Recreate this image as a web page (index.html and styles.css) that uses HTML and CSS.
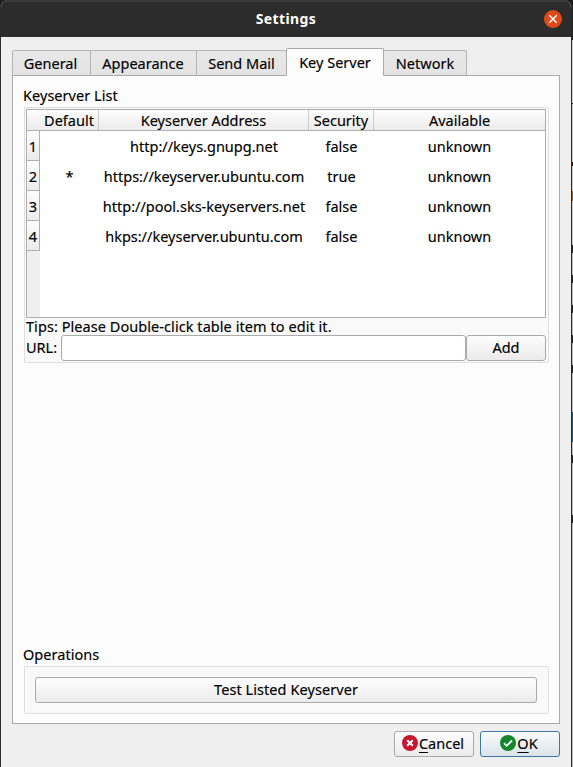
FILE: index.html
```html
<!DOCTYPE html>
<html lang="en">
<head>
<meta charset="utf-8">
<title>Settings</title>
<link rel="stylesheet" href="styles.css">
</head>
<body>
<div class="desktop">
  <main class="window">
    <header class="titlebar">
      <h1>Settings</h1>
      <button class="close" aria-label="Close"><svg width="18" height="18" viewBox="0 0 18 18"><circle cx="9" cy="9" r="9" fill="#e2491a"/><path d="M5.3 5.3l7.4 7.4M12.7 5.3l-7.4 7.4" stroke="#fff" stroke-width="1.5"/></svg></button>
    </header>
    <nav class="tabs">
      <div class="tab tab-general">General</div>
      <div class="tab tab-appearance">Appearance</div>
      <div class="tab tab-mail">Send Mail</div>
      <div class="tab tab-server active">Key Server</div>
      <div class="tab tab-network">Network</div>
    </nav>
    <section class="panel">
      <h2 class="label">Keyserver List</h2>
      <div class="group list-group">
        <div class="table">
          <div class="row head"><div></div><div>Default</div><div>Keyserver Address</div><div>Security</div><div>Available</div></div>
          <div class="row"><div class="num">1</div><div></div><div>http://keys.gnupg.net</div><div>false</div><div>unknown</div></div>
          <div class="row"><div class="num">2</div><div>*</div><div>https://keyserver.ubuntu.com</div><div>true</div><div>unknown</div></div>
          <div class="row"><div class="num">3</div><div></div><div>http://pool.sks-keyservers.net</div><div>false</div><div>unknown</div></div>
          <div class="row"><div class="num">4</div><div></div><div>hkps://keyserver.ubuntu.com</div><div>false</div><div>unknown</div></div>
          <div class="gutter"></div>
        </div>
        <p class="tips">Tips: Please Double-click table item to edit it.</p>
        <div class="url-row"><label for="url">URL:</label><input id="url" type="text"><button class="btn add">Add</button></div>
      </div>
      <h2 class="label ops">Operations</h2>
      <div class="group ops-group"><button class="btn test">Test Listed Keyserver</button></div>
    </section>
    <footer class="footer">
      <button class="btn action"><svg width="16" height="16" viewBox="0 0 16 16"><circle cx="8" cy="8" r="8" fill="#c8162f"/><path d="M5.2 5.2l5.6 5.6M10.8 5.2l-5.6 5.6" stroke="#fff" stroke-width="2"/></svg><span><u>C</u>ancel</span></button>
      <button class="btn action ok"><svg width="16" height="16" viewBox="0 0 16 16"><circle cx="8" cy="8" r="8" fill="#12872b"/><path d="M4 8.2l2.7 2.6L12 5.5" fill="none" stroke="#fff" stroke-width="1.8"/></svg><span><u>O</u>K</span></button>
    </footer>
  </main>
  <aside class="edge"></aside>
</div>
</body>
</html>
```

FILE: styles.css
```css
* { box-sizing: border-box; }
body { margin: 0; width: 573px; height: 767px; overflow: hidden; background: #1c1c1c; color: #000; font: 14.5px/18px "Noto Sans", sans-serif; white-space: nowrap; -webkit-text-stroke: 0.15px; }
h1, h2, p { margin: 0; font-weight: 400; font-size: inherit; }
button, input { font: inherit; color: inherit; padding: 0; margin: 0; }
.desktop { display: flex; height: 767px; }
.window { width: 572px; height: 767px; border-left: 1px solid #2b2b2b; border-right: 1px solid #2b2b2b; border-radius: 8px 8px 0 0; background: #efefef; overflow: hidden; }
.titlebar { display: grid; grid-template-columns: 30px 1fr 30px; align-items: center; height: 37px; background: #2c2c2c; border-top: 2px solid #3a3a3a; color: #fff; }
.titlebar h1 { grid-column: 2; padding-bottom: 2px; text-align: center; font-weight: 700; font-size: 14px; letter-spacing: 0.4px; -webkit-text-stroke: 0; }
.close { display: flex; width: 18px; height: 18px; margin: -2px 0 0 3px; border: 0; background: none; }
.tabs { display: flex; align-items: flex-end; height: 39px; padding-left: 11px; }
.tab { display: flex; justify-content: center; align-items: center; height: 26px; margin-right: -1px; border: 1px solid #b4b4b4; border-bottom-color: #a9a9a9; border-radius: 2px 2px 0 0; background: linear-gradient(#e8e8e8, #e3e3e3); }
.tab-general { width: 79px; padding-right: 2px; }
.tab-appearance { width: 107px; padding-right: 1px; }
.tab-mail { width: 91px; }
.tab-server { width: 98px; }
.tab-network { width: 84px; }
.tab.active { height: 28px; background: #fcfcfc; border-color: #a9a9a9; border-bottom-color: #fcfcfc; z-index: 1; }
.panel { width: 548px; height: 649px; margin: -1px 0 0 11px; padding: 10px 10px 0 11px; border: 1px solid #a9a9a9; background: #fcfcfc; }
.label { height: 21px; margin-left: -1px; letter-spacing: 0.04px; }
.group { width: 525px; border: 1px solid #dfdfdf; border-radius: 2px; background: #f9f9f9; }
.list-group { height: 256px; padding: 1px; }
.table { display: flex; flex-direction: column; width: 520px; height: 209px; border: 1px solid #aeaeae; background: #fff; }
.row { display: grid; grid-template-columns: 13px 59px 210px 65px 171px; height: 30px; flex: none; }
.row > div { display: flex; align-items: center; justify-content: center; }
.head { height: 21px; background: linear-gradient(#fdfdfd, #ebebeb); border-bottom: 1px solid #aeaeae; }
.head > div:not(:first-child):not(:last-child) { border-right: 1px solid #ccc; }
.row .num { border-right: 1px solid #aeaeae; border-bottom: 1px solid #aeaeae; background: linear-gradient(#fdfdfd, #ebebeb); }
.gutter { width: 13px; flex: 1; background: #efefef; }
.tips { height: 17px; line-height: 16px; letter-spacing: 0.06px; }
.url-row { display: flex; height: 26px; width: 520px; align-items: center; }
.url-row label { width: 35px; padding-bottom: 2px; }
.url-row input { width: 405px; height: 26px; border: 1px solid #aaa; border-radius: 3px; background: #fff; }
.btn { display: flex; justify-content: center; align-items: center; height: 26px; padding-bottom: 2px; border: 1px solid #aaa; border-radius: 3px; background: linear-gradient(#fdfdfd, #ebebeb); }
.add { width: 80px; }
.ops { margin-top: 282px; }
.ops-group { height: 48px; padding: 10px; }
.test { width: 502px; letter-spacing: 0.07px; }
.footer { display: flex; justify-content: flex-end; gap: 6px; padding: 7px 11px 0 0; }
.action { width: 80px; padding-right: 2px; }
.action svg { margin-right: 1px; }
.action u { text-underline-offset: 3px; text-decoration-thickness: 1px; }
.ok { border-color: #3979a1; background: linear-gradient(#fbfcfd, #dbe3e9); }
.edge { width: 1px; height: 767px; background: linear-gradient(#1f1f1f 0 40px, #d4d4d4 40px 103px, #111 103px 104px, #ccc 104px 162px, #2a1207 162px 166px, #ccc 166px 191px, #a05a20 191px 201px, #ccc 201px 245px, #222 245px 253px, #bbb 253px 275px, #222 275px 283px, #bbb 283px 305px, #222 305px 313px, #bbb 313px 335px, #222 335px 343px, #bbb 343px 365px, #222 365px 373px, #bbb 373px 412px, #155b86 412px 442px, #bbb 442px 455px, #222 455px 463px, #bbb 463px 515px, #222 515px 523px, #bbb 523px); }
```
